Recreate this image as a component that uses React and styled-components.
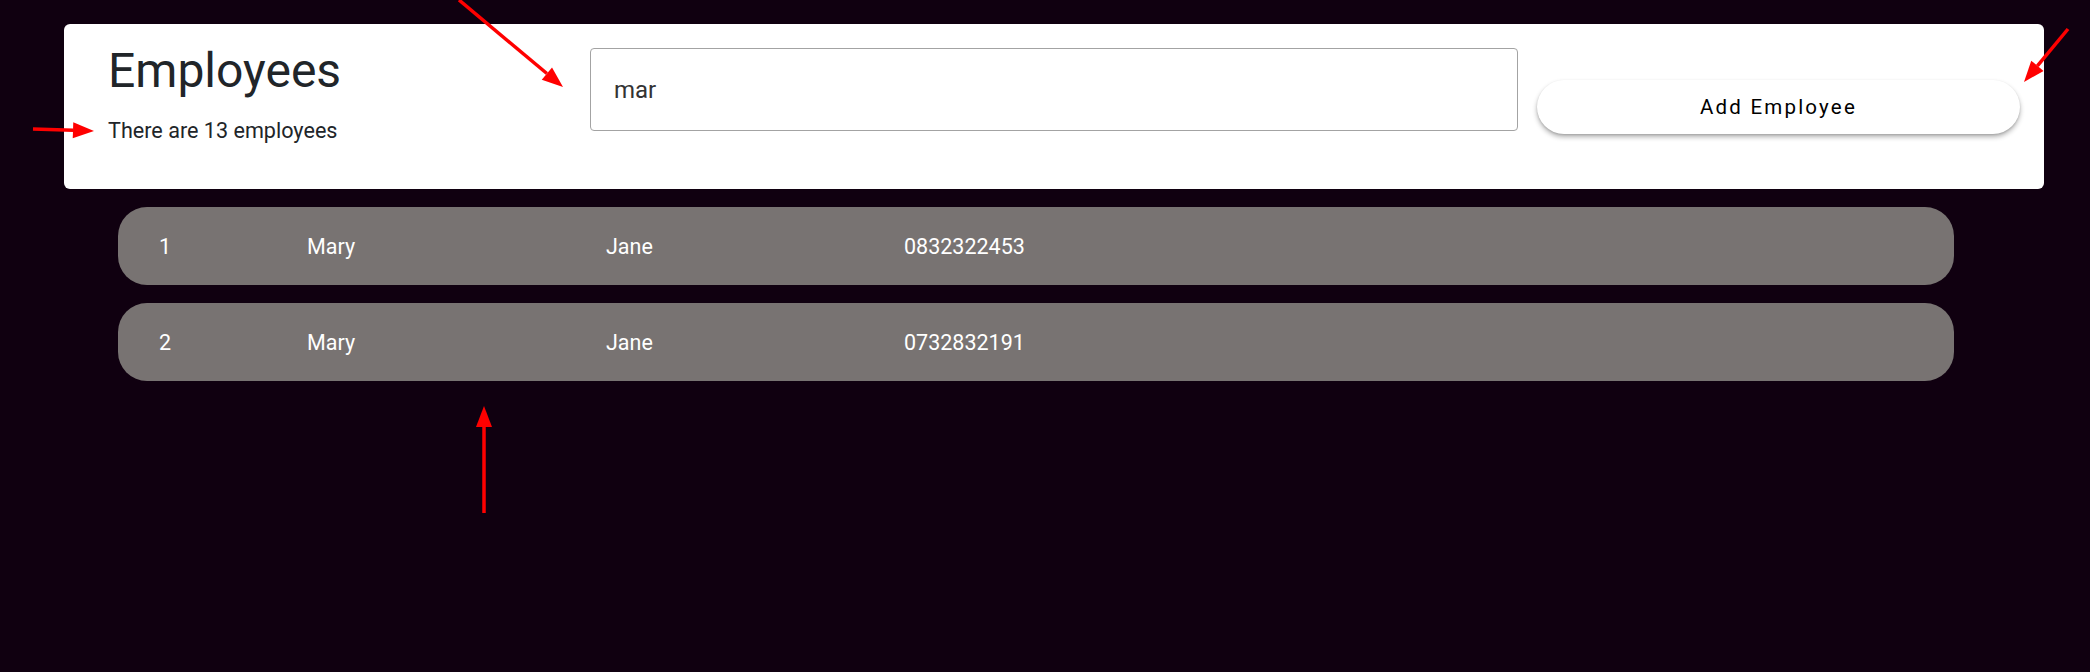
import React from 'react';
import styled, { createGlobalStyle } from 'styled-components';

const GlobalStyle = createGlobalStyle`
  html, body {
    margin: 0;
    padding: 0;
    background-color: #100010;
    font-family: Roboto, "Liberation Sans", sans-serif;
  }
  #root {
    min-height: 100vh;
  }
`;

const Page = styled.div`
  position: relative;
  min-height: 672px;
  padding: 24px 0 0 64px;
  box-sizing: border-box;
`;

const HeaderCard = styled.div`
  display: flex;
  align-items: flex-start;
  width: 1980px;
  height: 165px;
  box-sizing: border-box;
  padding: 23px 24px 0 44px;
  background-color: #fff;
  border-radius: 6px;
`;

const TitleBlock = styled.div`
  flex: 0 0 482px;
  display: flex;
  flex-direction: column;
  gap: 25px;
`;

const Title = styled.h1`
  margin: 0;
  font-size: 48px;
  line-height: 48px;
  font-weight: 400;
  color: #212529;
`;

const Subtitle = styled.p`
  margin: 0;
  font-size: 21.6px;
  line-height: 21.6px;
  color: #212529;
`;

const SearchInput = styled.input`
  flex: 0 0 928px;
  height: 83px;
  margin-top: 1px;
  box-sizing: border-box;
  padding: 0 23px;
  border: 1px solid #a3a3a3;
  border-radius: 4px;
  font-family: Roboto, "Liberation Sans", sans-serif;
  font-size: 24px;
  color: #333;
  outline: none;
`;

const AddButton = styled.button`
  flex: 0 0 483px;
  height: 54px;
  margin: 33px 0 0 19px;
  border: none;
  border-radius: 27px;
  background-color: #fff;
  box-shadow: 0 3px 5px rgba(0, 0, 0, 0.3), 0 1px 2px rgba(0, 0, 0, 0.12);
  font-family: Roboto, "Liberation Sans", sans-serif;
  font-size: 20.5px;
  font-weight: 400;
  letter-spacing: 2.2px;
  color: #000;
  cursor: pointer;
`;

const RowList = styled.div`
  display: flex;
  flex-direction: column;
  gap: 18px;
  width: 1836px;
  margin: 18px 0 0 54px;
`;

const Row = styled.div`
  display: grid;
  grid-template-columns: 148px 299px 298px 1fr;
  align-items: center;
  height: 78px;
  padding-left: 41px;
  border-radius: 29px;
  background-color: #787372;
  color: #fff;
  font-size: 21.5px;
  font-weight: 400;
`;

const Overlay = styled.svg`
  position: absolute;
  top: 0;
  left: 0;
  pointer-events: none;
`;

function Arrow({ x1, y1, x2, y2 }) {
  const len = Math.hypot(x2 - x1, y2 - y1);
  const ux = (x2 - x1) / len;
  const uy = (y2 - y1) / len;
  const head = 21;
  const half = 8;
  const bx = x2 - ux * head;
  const by = y2 - uy * head;
  const pts = [
    `${x2},${y2}`,
    `${bx - uy * half},${by + ux * half}`,
    `${bx + uy * half},${by - ux * half}`,
  ].join(' ');
  return (
    <g>
      <line x1={x1} y1={y1} x2={bx} y2={by} stroke="#ff0000" strokeWidth="3.5" />
      <polygon points={pts} fill="#ff0000" />
    </g>
  );
}

const employees = [
  { id: 1, first: 'Mary', last: 'Jane', phone: '0832322453' },
  { id: 2, first: 'Mary', last: 'Jane', phone: '0732832191' },
];

export default function App() {
  return (
    <Page>
      <GlobalStyle />
      <HeaderCard>
        <TitleBlock>
          <Title>Employees</Title>
          <Subtitle>There are 13 employees</Subtitle>
        </TitleBlock>
        <SearchInput defaultValue="mar" />
        <AddButton>Add Employee</AddButton>
      </HeaderCard>
      <RowList>
        {employees.map((e) => (
          <Row key={e.id}>
            <span>{e.id}</span>
            <span>{e.first}</span>
            <span>{e.last}</span>
            <span>{e.phone}</span>
          </Row>
        ))}
      </RowList>
      <Overlay width="2090" height="672">
        <Arrow x1={459} y1={0} x2={563} y2={87} />
        <Arrow x1={33} y1={129} x2={94} y2={131} />
        <Arrow x1={2068} y1={29} x2={2024} y2={82} />
        <Arrow x1={484} y1={513} x2={484} y2={406} />
      </Overlay>
    </Page>
  );
}
